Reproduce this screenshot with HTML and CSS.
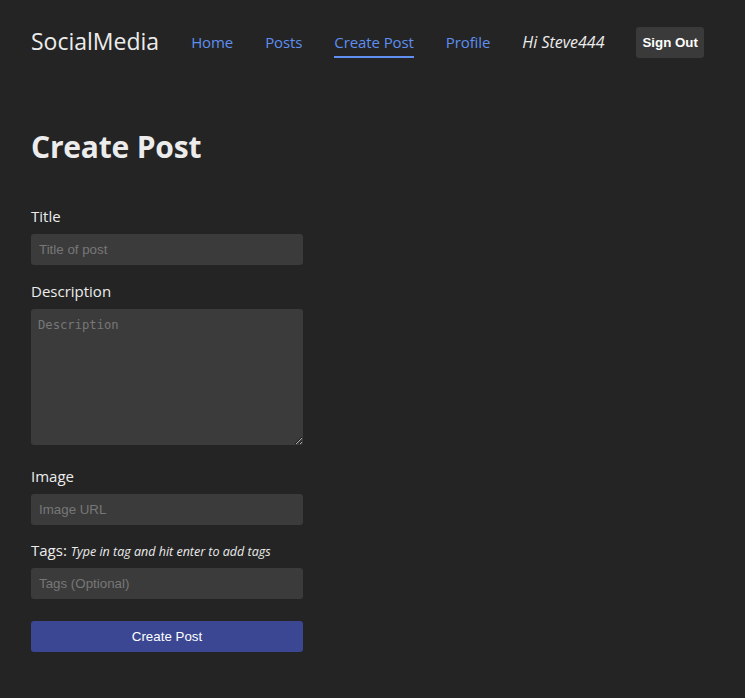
FILE: index.html
```html
<!DOCTYPE html>
<html>
<head>
<meta charset="utf-8">
<link rel="stylesheet" href="styles.css">
</head>
<body>
<header class="topbar">
  <div class="brand">SocialMedia</div>
  <nav class="nav">
    <a class="nav-link" href="#">Home</a>
    <a class="nav-link" href="#">Posts</a>
    <a class="nav-link active" href="#">Create Post</a>
    <a class="nav-link" href="#">Profile</a>
    <span class="greeting">Hi Steve444</span>
    <button class="signout">Sign Out</button>
  </nav>
</header>
<main class="content">
  <h1 class="page-title">Create Post</h1>
  <form class="post-form">
    <label class="field-label">Title</label>
    <input class="field first" type="text" placeholder="Title of post">
    <label class="field-label">Description</label>
    <textarea class="field area" placeholder="Description"></textarea>
    <label class="field-label">Image</label>
    <input class="field" type="text" placeholder="Image URL">
    <label class="field-label">Tags: <em class="hint">Type in tag and hit enter to add tags</em></label>
    <input class="field" type="text" placeholder="Tags (Optional)">
    <button class="submit" type="button">Create Post</button>
  </form>
</main>
</body>
</html>
```
FILE: styles.css
```css
html, body {
  margin: 0;
  padding: 0;
  background: #242424;
  color: #e8e8e8;
  font-family: "Open Sans", "Noto Sans", sans-serif;
}
.topbar {
  display: flex;
  align-items: center;
  padding: 27px 31px 0 31px;
  height: 31px;
}
.brand {
  font-size: 23px;
  color: #ececec;
  margin-right: 32px;
  line-height: 31px;
  position: relative;
  top: -1px;
}
.nav {
  display: flex;
  align-items: center;
  gap: 32px;
}
.nav-link {
  color: #5f8ff0;
  text-decoration: none;
  font-size: 15px;
  letter-spacing: -0.1px;
  line-height: 31px;
  position: relative;
}
.nav-link.active::after {
  content: "";
  position: absolute;
  left: 0;
  right: 0;
  bottom: 0;
  height: 2px;
  background: #5f8ff0;
}
.greeting {
  font-style: italic;
  font-size: 16px;
  line-height: 31px;
  color: #ececec;
}
.signout {
  background: #3a3a3a;
  color: #ffffff;
  border: none;
  border-radius: 3px;
  height: 31px;
  padding: 0 6px;
  font-family: "Liberation Sans", Arial, sans-serif;
  font-size: 13.3px;
  font-weight: bold;
}
.content {
  padding: 0 31px;
}
.page-title {
  margin: 69px 0 0 0;
  font-size: 30px;
  font-weight: 700;
  line-height: 40px;
  color: #ececec;
  letter-spacing: -0.2px;
}
.post-form {
  display: flex;
  flex-direction: column;
  width: 272px;
  margin-top: 39px;
}
.field-label {
  font-size: 15px;
  line-height: 20px;
  height: 20px;
  color: #ececec;
  margin-bottom: 8px;
}
.hint {
  font-size: 12.5px;
  line-height: 1;
}
.field {
  box-sizing: border-box;
  width: 272px;
  height: 31px;
  background: #3b3b3b;
  border: none;
  border-radius: 3px;
  padding: 0 8px;
  color: #ddd;
  font-family: "Liberation Sans", Arial, sans-serif;
  font-size: 13.33px;
  margin-bottom: 15px;
  outline: none;
}
.field.first {
  margin-bottom: 16px;
}
.field::placeholder {
  color: #777777;
}
.area {
  height: 136px;
  padding: 9px 7px;
  font-family: "DejaVu Sans Mono", monospace;
  font-size: 12.2px;
  resize: vertical;
  margin-bottom: 21px;
}
.submit {
  margin-top: 7px;
  height: 31px;
  width: 272px;
  background: #3b4792;
  color: #ffffff;
  border: none;
  border-radius: 3px;
  font-family: "Liberation Sans", Arial, sans-serif;
  font-size: 13.33px;
}
```
